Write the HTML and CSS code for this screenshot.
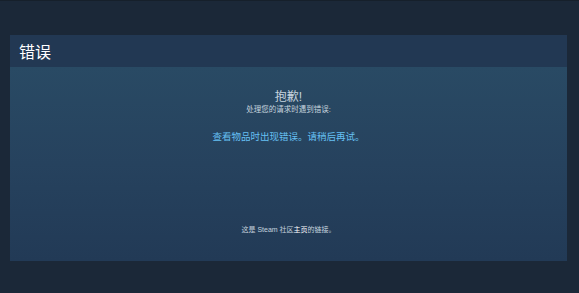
FILE: index.html
```html
<!DOCTYPE html>
<html lang="zh-CN">

<head>
    <meta charset="UTF-8">
    <meta name="viewport" content="width=device-width, initial-scale=1.0">
    <title>错误</title>
    <link rel="stylesheet" href="styles.css">
</head>

<body>
    <div class="page">
        <div class="panel">
            <div class="panel-header">
                <h1>错误</h1>
            </div>
            <div class="panel-body">
                <h2>抱歉!</h2>
                <p class="sub">处理您的请求时遇到错误:</p>
                <p class="error-text">查看物品时出现错误。请稍后再试。</p>
                <p class="footer-link">这是 Steam 社区<a href="#">主页</a>的链接。</p>
            </div>
        </div>
    </div>
</body>

</html>
```

FILE: styles.css
```css
body {
    margin: 0;
    background-color: #1b2838;
    font-family: Arial, "Liberation Sans", "Noto Sans CJK SC", sans-serif;
    color: #c6d4df;
    border-top: 1px solid #16202b;
}

.page {
    padding: 34px 12px 32px 10px;
}

.panel {
    background: #213a54;
}

.panel-header {
    height: 32px;
    background: #223853;
    display: flex;
    align-items: center;
    padding-left: 9px;
}

.panel-header h1 {
    margin: 0;
    font-size: 16px;
    font-weight: normal;
    color: #ffffff;
}

.panel-body {
    height: 194px;
    box-sizing: border-box;
    background: linear-gradient(to bottom, #294a64 0%, #26425e 50%, #223a56 100%);
    text-align: center;
    padding-top: 22px;
}

.panel-body h2 {
    margin: 0;
    font-size: 12px;
    font-weight: normal;
    color: #c6d4df;
    line-height: 16px;
}

.sub {
    margin: 0;
    font-size: 7.5px;
    line-height: 10px;
    color: #c6d4df;
}

.error-text {
    margin: 15px 0 0;
    font-size: 9.5px;
    line-height: 14px;
    color: #66c0f4;
}

.footer-link {
    margin: 81px 0 0;
    font-size: 7px;
    line-height: 10px;
    color: #c6d4df;
}

.footer-link a {
    color: #ffffff;
    text-decoration: none;
}
```
